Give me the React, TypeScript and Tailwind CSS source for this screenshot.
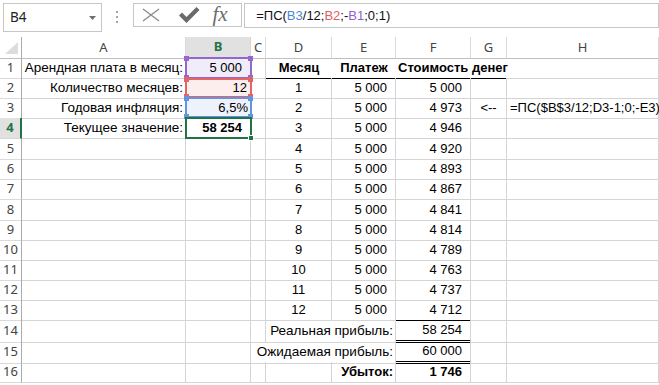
import React from "react";

const COLS = "grid grid-cols-[22px_164px_65px_15px_66px_64px_75px_36px_152px]";

const rowH = [
  "h-[20px]", "h-[20px]", "h-[20px]", "h-[21px]", "h-[20px]", "h-[20px]", "h-[21px]", "h-[20px]",
  "h-[20px]", "h-[20px]", "h-[20px]", "h-[20px]", "h-[20px]", "h-[21px]", "h-[21px]", "h-[20px]",
];

type CellProps = {
  children?: React.ReactNode;
  r?: boolean;
  b?: string;
  className?: string;
};

function Cell({ children, r = true, b = "border-b border-b-[#d4d4d4]", className = "" }: CellProps) {
  return (
    <div
      className={`flex items-center whitespace-nowrap min-w-0 ${r ? "border-r border-r-[#d4d4d4]" : ""} ${b} ${className}`}
    >
      {children}
    </div>
  );
}

const fVals = ["5 000", "4 973", "4 946", "4 920", "4 893", "4 867", "4 841", "4 814", "4 789", "4 763", "4 737", "4 712"];

const BLACK = "border-b border-b-black";
const DBL = "border-b-[3px] border-double border-b-black";

function RowHead({ n, active }: { n: number; active?: boolean }) {
  if (active) {
    return (
      <div className="flex items-center justify-center bg-[#e1e1e1] border-r-2 border-r-[#217346] border-b border-b-[#d5d5d5] text-[#217346] font-bold font-['Noto_Sans'] text-[13px]">
        {n}
      </div>
    );
  }
  return (
    <div className="flex items-center justify-center border-r border-r-[#ababab] border-b border-b-[#dadada] text-[#444] font-['Noto_Sans'] text-[13px]">
      {n}
    </div>
  );
}

function rowCells(i: number): React.ReactNode[] {
  const A: Record<number, string> = {
    1: "Арендная плата в месяц:",
    2: "Количество месяцев:",
    3: "Годовая инфляция:",
    4: "Текущее значение:",
  };
  const cells: React.ReactNode[] = [];
  cells.push(
    <Cell key="A" className="justify-end pr-[2px] text-[13.5px]">
      {A[i] ?? ""}
    </Cell>
  );
  if (i === 1) cells.push(<Cell key="B" className="justify-end pr-[8px] bg-[#f1ecf9]">5 000</Cell>);
  else if (i === 2) cells.push(<Cell key="B" className="justify-end pr-[3px] bg-[#fdeeee]">12</Cell>);
  else if (i === 3) cells.push(<Cell key="B" className="justify-end pr-[2px] bg-[#edf2fc]">6,5%</Cell>);
  else if (i === 4) cells.push(<Cell key="B" className="justify-end pr-[8px] font-bold">58 254</Cell>);
  else cells.push(<Cell key="B" />);
  cells.push(<Cell key="C" r={i !== 15} />);
  if (i === 1) {
    cells.push(<Cell key="D" r={false} b={BLACK} className="justify-center font-bold">Месяц</Cell>);
    cells.push(<Cell key="E" r={false} b={BLACK} className="justify-center font-bold">Платеж</Cell>);
    cells.push(<Cell key="F" r={false} b={BLACK} className="justify-start pl-[2px] font-bold">Стоимость денег</Cell>);
    cells.push(<Cell key="G" r={false} b={BLACK} />);
    cells.push(<Cell key="H" />);
  } else if (i >= 2 && i <= 13) {
    cells.push(<Cell key="D" className="justify-center">{i - 1}</Cell>);
    cells.push(<Cell key="E" className="justify-end pr-[8px]">5 000</Cell>);
    cells.push(
      <Cell key="F" b={i === 13 ? BLACK : undefined} className="justify-end pr-[8px]">
        {fVals[i - 2]}
      </Cell>
    );
    cells.push(<Cell key="G" className="justify-center">{i === 3 ? "<--" : ""}</Cell>);
    cells.push(<Cell key="H" className="justify-start pl-[3px]">{i === 3 ? "=ПС($B$3/12;D3-1;0;-E3)" : ""}</Cell>);
  } else if (i === 14) {
    cells.push(<Cell key="D" r={false} />);
    cells.push(<Cell key="E" className="justify-end pr-[2px] text-[13.5px]">Реальная прибыль:</Cell>);
    cells.push(<Cell key="F" b={DBL} className="justify-end pr-[8px]">58 254</Cell>);
    cells.push(<Cell key="G" />);
    cells.push(<Cell key="H" />);
  } else if (i === 15) {
    cells.push(<Cell key="D" r={false} />);
    cells.push(<Cell key="E" className="justify-end pr-[2px] text-[13.5px]">Ожидаемая прибыль:</Cell>);
    cells.push(<Cell key="F" b={DBL} className="justify-end pr-[8px]">60 000</Cell>);
    cells.push(<Cell key="G" />);
    cells.push(<Cell key="H" />);
  } else {
    cells.push(<Cell key="D" />);
    cells.push(<Cell key="E" className="justify-end pr-[2px] font-bold">Убыток:</Cell>);
    cells.push(<Cell key="F" className="justify-end pr-[8px] font-bold">1 746</Cell>);
    cells.push(<Cell key="G" />);
    cells.push(<Cell key="H" />);
  }
  return cells;
}

function Corners({ color }: { color: string }) {
  return (
    <>
      <div className={`absolute -left-[3px] -top-[3px] w-[5px] h-[5px] ${color}`} />
      <div className={`absolute -right-[3px] -top-[3px] w-[5px] h-[5px] ${color}`} />
      <div className={`absolute -left-[3px] -bottom-[3px] w-[5px] h-[5px] ${color}`} />
      <div className={`absolute -right-[3px] -bottom-[3px] w-[5px] h-[5px] ${color}`} />
    </>
  );
}

export default function App() {
  const headers = ["A", "B", "C", "D", "E", "F", "G", "H"];
  return (
    <div className="relative w-[659px] h-[385px] overflow-hidden bg-white font-['Liberation_Sans'] text-[13px] text-black">
      {/* Formula bar */}
      <div className="h-[37px] flex items-start pt-[3px]">
        <div className="ml-[3px] w-[100px] h-[29px] border border-[#c6c6c6] flex items-center pl-[6px] pr-[5px]">
          <span className="font-['Noto_Sans'] text-[13.5px] text-[#222]">B4</span>
          <svg className="ml-auto" width="7" height="4" viewBox="0 0 7 4">
            <path d="M0 0 L7 0 L3.5 4 Z" fill="#6f6f6f" />
          </svg>
        </div>
        <div className="w-[31px] flex flex-col items-center gap-[3px] pt-[8px]">
          <div className="w-[2px] h-[2px] bg-[#a6a6a6]" />
          <div className="w-[2px] h-[2px] bg-[#a6a6a6]" />
          <div className="w-[2px] h-[2px] bg-[#a6a6a6]" />
        </div>
        <div className="w-[111px] h-[24px] border border-[#c6c6c6] flex items-center pl-[8px]">
          <svg width="18" height="14" viewBox="0 0 18 14">
            <path d="M1 1 L17 13 M17 1 L1 13" stroke="#8a8a8a" strokeWidth="1.3" />
          </svg>
          <svg className="ml-[19px]" width="21" height="16" viewBox="0 0 21 16">
            <path d="M0 8.5 L3 5.5 L7.5 10 L17.5 0 L20.5 3 L7.5 16 Z" fill="#6a6a6a" />
          </svg>
          <span className="ml-[13px] font-['Liberation_Serif'] italic text-[21px] leading-none text-[#6c6c6c] -mt-[1px]">
            fx
          </span>
        </div>
        <div className="ml-[2px] w-[420px] h-[25px] border border-[#c6c6c6] flex items-center pl-[11px] text-[13px] text-[#111]">
          <span>=ПС(</span>
          <span className="text-[#4f86d9]">B3</span>
          <span>/12;</span>
          <span className="text-[#e0605d]">B2</span>
          <span>;-</span>
          <span className="text-[#9163c9]">B1</span>
          <span>;0;1)</span>
        </div>
      </div>

      {/* Column headers */}
      <div className={`${COLS} h-[21px] font-['Noto_Sans'] text-[13px] text-[#444]`}>
        <div className="relative border-r border-r-[#ababab] border-b border-b-[#bfbfbf]">
          <svg className="absolute left-[5px] top-[5px]" width="13" height="12" viewBox="0 0 13 12">
            <path d="M13 0 L13 12 L0 12 Z" fill="#dcdcdc" />
          </svg>
        </div>
        {headers.map((h) =>
          h === "B" ? (
            <div
              key={h}
              className="flex items-center justify-center bg-[#e1e1e1] border-r border-r-[#d5d5d5] border-b-2 border-b-[#217346] text-[#217346] font-bold"
            >
              {h}
            </div>
          ) : (
            <div
              key={h}
              className="flex items-center justify-center border-r border-r-[#d9d9d9] border-b border-b-[#bfbfbf]"
            >
              {h}
            </div>
          )
        )}
      </div>

      {/* Rows */}
      {rowH.map((h, idx) => {
        const n = idx + 1;
        return (
          <div key={n} className={`${COLS} ${h}`}>
            <RowHead n={n} active={n === 4} />
            {rowCells(n)}
          </div>
        );
      })}

      {/* Reference highlights */}
      <div className="absolute left-[185px] top-[57px] w-[67px] h-[22px] border-2 border-[#9467cf]">
        <Corners color="bg-[#9467cf]" />
      </div>
      <div className="absolute left-[185px] top-[78px] w-[67px] h-[20px] border-2 border-[#e36464]">
        <Corners color="bg-[#e36464]" />
      </div>
      <div className="absolute left-[185px] top-[97px] w-[67px] h-[21px] border-2 border-[#6394e0]">
        <Corners color="bg-[#6394e0]" />
      </div>
      <div className="absolute left-[185px] top-[117px] w-[67px] h-[22px] border-2 border-[#217346]">
        <div className="absolute -right-[4px] -bottom-[4px] w-[6px] h-[6px] bg-[#217346] border border-white" />
      </div>
    </div>
  );
}
